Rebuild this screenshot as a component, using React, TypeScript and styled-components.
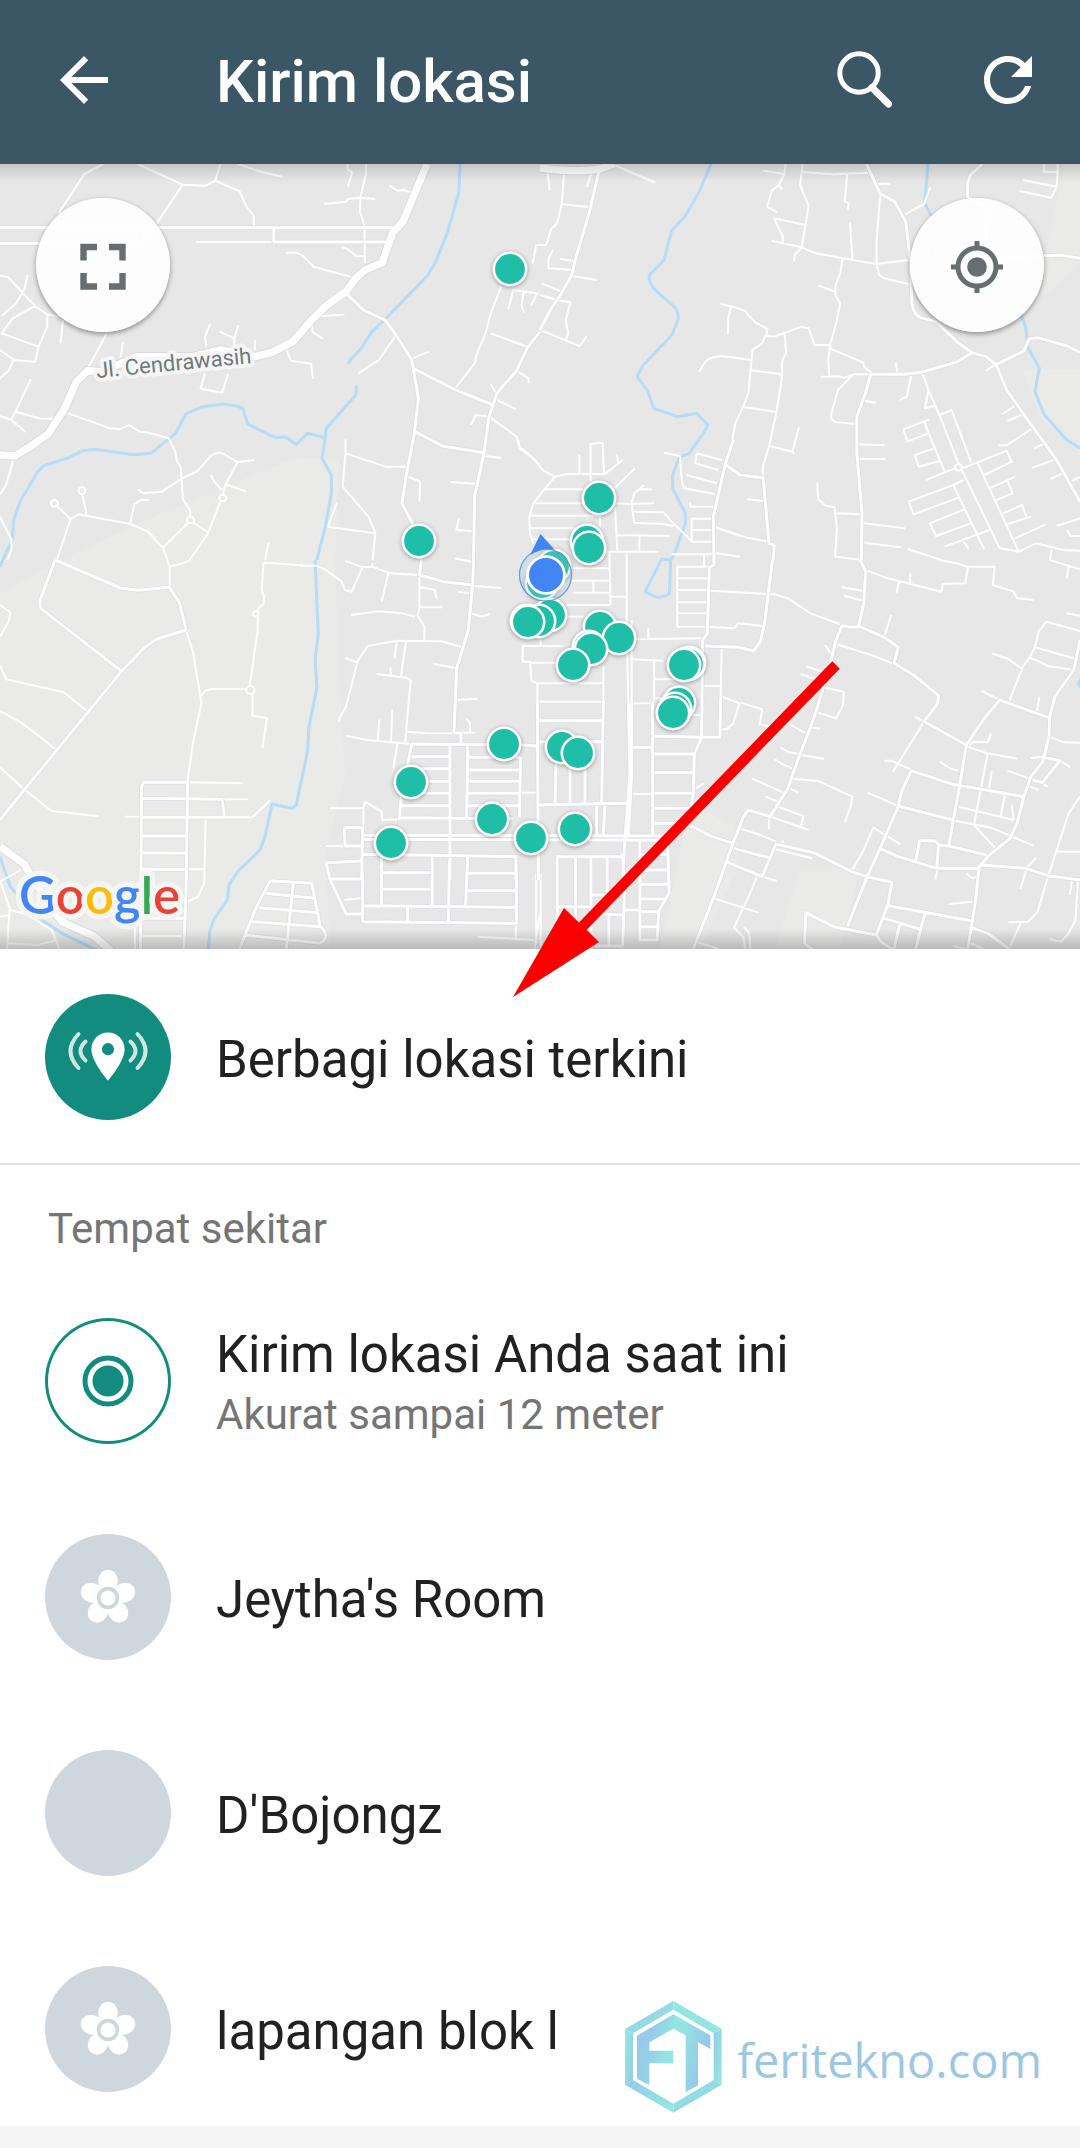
import React from "react";
import styled, { createGlobalStyle } from "styled-components";

const teal = "#128c7e";

const GlobalStyle = createGlobalStyle`
  *, *::before, *::after { box-sizing: border-box; }
  body { margin: 0; background: #ffffff; font-family: Roboto, "Liberation Sans", sans-serif; }
  button { font: inherit; color: inherit; border: 0; padding: 0; background: none; cursor: pointer; }
  svg { display: block; }
`;

const Screen = styled.main`
  position: relative;
  display: flex;
  flex-direction: column;
  height: 100vh;
  overflow: hidden;
  background: #ffffff;
`;

const AppBar = styled.header`
  display: flex;
  flex: none;
  align-items: center;
  height: 164px;
  padding: 0 36px 4px 48px;
  background: #3b5664;
  color: #ffffff;
`;

const Title = styled.h1`
  flex: 1;
  margin: 0 0 0 96px;
  padding-top: 4px;
  font-size: 60px;
  line-height: 72px;
  font-weight: 500;
`;

const Actions = styled.div`
  display: flex;
  gap: 72px;
`;

const IconButton = styled.button`
  display: grid;
  place-items: center;
  width: 72px;
  height: 72px;
`;

const MapPanel = styled.section`
  position: relative;
  flex: none;
  height: 785px;
  background: #e7e7e7;

  &::before, &::after {
    content: "";
    position: absolute;
    left: 0;
    right: 0;
    pointer-events: none;
  }
  &::before {
    top: 0;
    height: 18px;
    background: linear-gradient(rgba(0, 0, 0, 0.14), rgba(0, 0, 0, 0));
  }
  &::after {
    bottom: 0;
    height: 20px;
    background: linear-gradient(rgba(0, 0, 0, 0), rgba(0, 0, 0, 0.2));
  }
`;

const MapCanvas = styled.svg`
  width: 100%;
  height: 100%;
`;

const MapButton = styled.button<{ $side: "left" | "right" }>`
  position: absolute;
  top: 34px;
  ${(p) => p.$side}: 36px;
  z-index: 1;
  display: grid;
  place-items: center;
  width: 134px;
  height: 134px;
  border-radius: 50%;
  background: rgba(255, 255, 255, 0.92);
  box-shadow: 0 2px 5px rgba(0, 0, 0, 0.4);
  color: #666e70;
`;

const Sheet = styled.div`
  flex: 1;
  min-height: 0;
  overflow-y: auto;
  scrollbar-width: none;
`;

const LiveSection = styled.section`
  border-bottom: 2px solid #e0e0e0;
`;

const SectionTitle = styled.h2`
  margin: 0;
  padding: 36px 48px 16px;
  font-size: 42px;
  line-height: 56px;
  font-weight: 400;
  color: #757575;
`;

const PlaceList = styled.ul`
  margin: 0;
  padding: 0;
  list-style: none;
`;

const Row = styled.button<{ $compact?: boolean }>`
  display: flex;
  align-items: center;
  gap: 45px;
  width: 100%;
  padding: 45px 45px ${(p) => (p.$compact ? 43 : 45)}px;
  text-align: left;
`;

const Avatar = styled.span<{ $kind: "live" | "current" | "place" }>`
  display: grid;
  flex: none;
  place-items: center;
  width: 126px;
  height: 126px;
  border-radius: 50%;
  background: ${(p) => (p.$kind === "live" ? teal : p.$kind === "place" ? "#ced7dd" : "#ffffff")};
  box-shadow: ${(p) => (p.$kind === "current" ? `inset 0 0 0 3px ${teal}` : "none")};
`;

const RowText = styled.span`
  display: flex;
  flex-direction: column;
  min-width: 0;
  padding-top: 6px;
`;

const RowTitle = styled.span`
  font-size: 51px;
  line-height: 62px;
  color: #212121;
`;

const RowNote = styled.span`
  font-size: 42px;
  line-height: 58px;
  color: #757575;
`;

const SystemBar = styled.footer`
  flex: none;
  height: 22px;
  background: #f5f5f5;
`;

const Pointer = styled.svg`
  position: absolute;
  top: 660px;
  left: calc(50% - 28px);
  pointer-events: none;
`;

const Watermark = styled.div`
  position: absolute;
  right: 38px;
  bottom: 34px;
  display: flex;
  align-items: center;
  gap: 14px;
  font-family: "Open Sans", "Noto Sans", sans-serif;
  font-size: 47px;
  line-height: 64px;
  color: #9bc7e2;
  pointer-events: none;
`;

const WatermarkName = styled.span`
  padding-top: 6px;
`;

type Tile = {
  at: string;
  major?: string;
  medium: string;
  thin: string;
  water?: string;
  rings?: number[][];
};

const WIDE = "scale(.34439 .33333)";

const tiles: Tile[] = [
  {
    at: `translate(0 -4) ${WIDE}`,
    water:
      "M1336 12L1332 100L1298 220L1265 305L1243 345L1118 478L1080 515L1045 570L1018 598L1012 612M1035 677L1033 705L948 805L935 895L962 945V1000L945 1100L920 1200M940 832L893 820L860 853L830 832H797L720 793L705 745L688 738L648 732L585 741L540 762L510 820L438 880L388 884L275 868L240 872L200 893L127 917L110 935L60 1020L40 1080L35 1140L8 1200",
    major:
      "M1240 12L1170 185L1140 218L1110 308L1060 330L1030 358L1005 395L948 436L905 480L850 545L790 577L740 590L640 570L560 590L400 590L340 615L300 635L255 632L222 665L185 750L140 822L80 865L42 888L0 885",
    medium:
      "M0 203H1145M0 250H420M420 203V250M795 203V246H1120M1005 400L1055 450L1118 480L1150 525L1195 598L1215 715L1203 820L1180 945L1167 1030L1200 1095M1200 625L1320 688L1432 735M1205 815L1285 858L1405 878M1568 515L1530 565L1500 632L1443 700L1420 770L1405 880L1378 1010L1375 1200",
    thin:
      "M570 246H795M300 12L245 42L170 160M400 12L530 74L455 190M530 74L598 77L625 62L640 12M625 62L695 93L715 138L737 168V200M690 12L760 36L820 50M1008 12L1010 28L1023 38L1010 80M1063 12V40L1047 110L1045 155L1058 195L1060 310M940 132L1005 125L1010 117L1045 113L1090 117M1130 77L1155 92L1170 90L1195 98M992 262L1008 266L1035 289H1058M830 278H862L880 288L910 320L1018 350M925 469L1000 464M905 490L908 516L937 536M832 570L845 602L903 611L909 657M1150 525L1100 600L1040 640M1200 594L1245 575M1455 380L1425 460L1410 520L1385 580L1378 610L1322 685M1425 520L1530 560M1490 392L1476 448M1488 390L1560 400L1542 437M1520 396L1514 435L1522 458M1568 255H1557L1547 310M1500 632L1535 655V670M1440 700L1425 673M1443 720L1498 748M1420 770L1382 765L1367 795M1420 770L1500 830L1508 862L1545 890L1568 918M1405 888L1455 893M1308 966L1383 971M1333 1075L1325 1110L1370 1113M1003 838V880L995 980L1070 1070L1090 1118L1082 1200M1003 880L1120 920L1180 920M1180 948L1220 965L1218 1025M978 1028L952 1100L1090 1120M610 492L595 532L600 560M638 515L680 535L692 495M680 535V560M740 540V570M595 640L582 686L645 698L662 642M357 545L350 595M310 520L258 620M0 347L22 350L102 438L137 463L180 470M80 345L72 385L47 430L5 467M102 438L37 475L5 520L112 560M137 463V500L112 560L102 605L40 600L0 570M40 600L25 632L0 655M183 480L176 550M90 657L45 755L118 776H155M45 755L32 780L0 768M32 780L75 816M192 758L320 805L348 808L375 795L405 815L432 818L490 835L508 873L514 905L525 922L531 1018L552 1052V1070M738 900L690 907L655 885Q635 870 612 888L573 933L525 958L470 995L415 1000L402 988M432 1020H410L390 1032L378 1092M38 900L18 975L0 1003M690 907L655 972L648 1003M612 945L622 965L645 990M655 972L715 995M640 1024L605 1118L572 1168L550 1200M545 1090L472 1163L487 1200M562 1088L605 1118M160 1033L205 1077L228 1063L378 1092L430 1115L472 1163M238 1000L252 1065M205 1077L165 1200M0 1070L33 1138V1170L22 1200M780 1147L770 1200",
    rings: [[158, 1030, 10], [238, 992, 10], [647, 1014, 10], [553, 1080, 10]],
  },
  {
    at: `translate(540 -4) ${WIDE}`,
    water:
      "M497 12L460 100L420 170L382 212L360 300L318 345Q310 365 345 400L390 440Q405 460 400 480L383 525L300 615L282 650L312 692L330 745L400 770L455 760L487 795L478 815L432 882L405 890L385 945V985L422 1060V1090L405 1140L382 1200M1127 12L1117 130L1135 165L1160 210L1130 300V430L1150 440L1240 398L1330 405L1390 450L1410 500L1418 565L1450 625L1437 695L1465 765L1530 840L1568 865",
    major: "M0 24Q100 38 170 28L215 12",
    medium:
      "M170 38L145 150L105 290L92 345L62 400L30 450L0 510M948 12L988 102L1030 125L1062 185L1075 300L1080 430Q1085 465 1105 473L1150 485L1210 545L1255 578L1295 590L1325 615L1355 690L1430 800L1500 900L1568 1025M1285 12L1250 45L1241 70V110L1290 140L1297 250M1255 578L1210 606L1110 636L1060 643H960L945 700L920 770V880L935 1060L933 1200M1325 613L1405 573L1420 537L1445 533L1530 558L1568 577M1297 305L1400 290L1510 285L1568 295M540 915L580 945L648 953L665 1150L680 1155L677 1200",
    thin:
      "M70 40L63 132L50 190L32 208L18 255H0M63 132L145 142M22 40L28 90M148 40L137 82M215 15L335 68M38 270L25 295V325L92 330M58 297L97 303M92 348L165 360M5 370L62 395M0 405L50 420L88 427L75 480L82 520L75 540M5 512L115 558L135 530M648 32L710 42L713 12M710 42L693 75L673 92L660 140L690 158M693 75L703 88M763 12L755 75L780 137L760 262M757 35L850 43L955 38M892 43L885 125L897 130L893 150M680 175L770 195M680 175L705 230V250M672 242L760 262L800 280L975 312L1072 300M760 262L740 285L737 305M900 187L907 295M988 102L977 250V312L985 345L1000 355L1070 372M975 72H1015M1060 163L1115 132L1133 82M878 297L872 340L858 375V405L872 430L860 490L842 555M808 376L858 396M525 432L560 440L595 453L625 487L660 507L657 527L680 530L760 500L780 505L797 555H842L845 567L938 607L942 622L963 637M555 440L547 470L545 523M660 515L645 550L617 570L605 700L590 740L567 790L555 860L540 915M710 520L715 577L703 605V650L687 755L665 860L647 920V953M462 635L480 605Q495 590 530 588L612 600M608 630L697 642L703 655M590 741L687 756M667 858L733 875L752 802M733 875L738 882M842 555L837 600L840 650M815 650L865 649L885 653L910 643H960M908 645L865 690L845 765Q843 780 858 787L918 792M940 722L975 728M1033 607L1038 640M1078 645L1065 710L1045 720M1110 638L1128 690L1118 745L1145 738M1128 690L1160 765L1215 910M1160 765L1195 750L1252 907M1055 808L1130 778M1055 808L1067 845L1127 820M1115 785L1175 935M1088 885L1145 865M1088 885L1100 920L1160 903M1120 960L1205 925M1225 925L1270 907L1355 872L1370 905L1290 945M1270 907L1390 1175M1225 930L1335 1165L1390 1175L1440 1150L1520 1170L1568 1172M1070 1025L1200 975L1230 960M1070 1025L1085 1063L1215 1013M1200 975L1290 1168M1132 1090L1232 1048M1132 1090L1150 1128L1250 1090M1175 1160L1305 1110M1230 1145L1245 1168M1305 985L1380 950M1357 962L1372 1000L1325 1020M1345 1060L1400 1035L1412 1070M1350 1095L1425 1070M1380 1135L1468 1093M1500 1098L1568 1075M1343 762L1378 738M1357 783L1397 765M1427 807L1355 856H1333M1435 865L1465 850M1428 924L1492 900M1482 957L1518 940M1545 963L1568 950M920 853L1000 856M928 897H1003M805 967L808 1018L830 1037L855 1042L862 1105L857 1190L935 1200M862 1060L930 1063M940 1090L1060 1105M942 1148L1048 1162M1067 1167L1165 1200M1463 12V36H1503V12M1503 36L1500 80L1485 113L1393 93M1402 60L1500 80M1295 632L1325 612M505 1100L600 1133L665 1145M602 1018L650 1023M1530 1110L1540 1128H1568M1486 1170L1480 1200",
    rings: [[1215, 922, 10]],
  },
  {
    at: `translate(0 396) ${WIDE}`,
    water:
      "M8 0L0 20M915 0L924 220L915 300L920 385L897 500L893 575L860 735L848 745L790 733L768 835L755 870L690 935L665 975L660 1020L620 1080L610 1110L603 1180M0 890L30 980L100 1065L180 1120L290 1175",
    major: "M0 860L70 912L95 955L150 1045L180 1085L275 1130L330 1180",
    medium:
      "M160 0L115 125L118 145L352 333M160 0L350 84L400 91L492 82L522 130L540 210L455 237L420 262L352 335L70 690L0 780M413 667H545M418 667L411 680L408 1180M545 660L540 1000L533 1180M410 715L645 718L652 772M410 772H650M410 828H542M410 878L540 880M410 928H540M410 1075H535M785 962L905 970L930 1100Q962 1130 930 1150L712 1125M785 962L745 1040L690 1180M852 965L830 1180M772 1000L915 1015M752 1043L925 1058M733 1085L930 1100M733 772L785 720M947 908L1050 903M947 908L958 957L1005 1062H1050M958 957H1050M1053 940V1085L1500 1090V940M1053 1037L1500 1042M1183 1040V1088M1305 900L1302 1090M1108 890V1035M1108 938H1250M1108 988H1250M1255 890V1035M1358 890L1352 1035M1355 940H1500M1355 992H1500",
    thin:
      "M485 0L493 20V80M493 20L530 10L555 0M540 210L560 275L585 430L560 550L545 660M0 315L18 358L185 397L258 457M0 453L60 487L120 533L165 572M0 622L70 688L150 753L285 769M583 408L595 393L612 387H715M765 8L760 90L767 110L765 133L750 145L748 215L725 375M733 403V467L775 474L762 565M765 8L880 16M0 135L30 157L25 185L0 230M545 667L705 670M645 718H720M362 770H410M650 772H733M597 775L593 970L575 1010L545 1025M545 928H593M0 960L28 1045L20 1180M28 1050L75 1062L150 1110L178 1180M60 930L0 965M0 1070L25 1065M20 1150L110 1155L165 1140M392 1100V1180M410 1128H533M1000 1020L1050 1015M1498 1090V1140M1387 1130L1550 1140M1568 1060L1550 1180M1557 940V1150",
    rings: [[743, 162, 8], [727, 390, 12]],
  },
  {
    at: `translate(540 396) ${WIDE}`,
    medium:
      "M675 0L652 190L640 245L620 273L578 262L480 258M930 0L946 35L940 130L925 200L905 202L877 197L858 245L845 300L815 410L790 490L752 590L720 685L668 770L605 750L590 770L580 800L560 850L505 1010L440 1180M925 198L1000 232L1040 262L1028 310L1085 345L1157 407L1155 430L1115 485L1238 555L1290 475L1335 420L1475 472M1568 240L1550 330L1495 410L1480 470L1478 530L1460 605L1425 650L1405 710L1385 790L1365 835L1305 885L1275 920L1265 1020L1240 1180M1238 555L1218 680L1200 780L1187 858M1078 632L1195 672L1405 710M1078 632L1050 695L1040 740L990 860L950 950L892 1100M1040 738L1200 780M1187 858L1297 885M1187 858L1160 855L1145 842H1103L1090 905M1157 858L1152 923M988 865L1040 890L1152 925H1280M1280 915L1410 925L1475 947L1568 960M430 793L500 830L560 850M563 865L665 893M540 905L645 950L685 852L800 880L905 935L950 950L1022 967L1010 1035L995 1075L977 1125M1012 1037L1252 1082M1000 1075L1105 1108L1118 1060M1105 1108L1088 1180M1045 1090L1025 1180M977 1125L852 1100L772 1058L768 1150L805 1180M977 1125L990 1145L1040 1180M1252 1103L1300 1120L1380 1180M1457 590L1510 602L1458 668L1430 660M50 890V1180M103 890V1180M148 890V1180M195 890V1005M240 880L245 1000L240 1160M50 890H242M50 1040H150M152 1005H240M180 1062L240 1065M200 1065V1155M160 1158H240M290 840V1140H340L345 1055H290M290 883H370M290 930H370M290 973H375M290 1017H368M290 1100H343M370 840L375 1000L343 1055M245 1050H290",
    thin:
      "M495 92L680 103L720 115L785 160L870 192M480 200L565 205L575 190L648 198M1160 0L1210 10L1240 20H1320L1315 75L1375 95L1385 115L1432 120M950 32L1010 55L1165 95L1170 72L1235 70L1243 20M1043 65L1035 98M1075 40V72M875 82L937 92M883 107L937 122M1020 165L1000 230M860 252L970 288L1030 313M828 255L845 283M775 320L815 333M757 342L805 360M820 382L882 395L880 435L860 475L807 458M787 502L813 507M1535 20L1530 55M1480 0L1568 28M1528 160L1568 167M1568 213L1470 185L1448 215L1437 262L1422 292L1402 320L1363 422M1437 262L1550 295M1422 292L1450 305L1475 318L1550 330M1313 280L1360 297L1402 328M1282 393L1340 422M1450 412L1443 458M1088 470L1115 485L1025 635M1000 602H1020L1075 628M950 697L1040 738M698 562L723 577L755 582M680 597L705 613L732 625M615 655L705 697M755 585L825 596M720 683L750 697M655 710L690 725M735 657L805 662L907 710L903 735L885 787M690 740L765 768L758 797M670 770L780 810M665 770V808M580 805L640 825L685 845M685 868L790 895M705 840V852M505 1015L635 1058M630 950L610 1000L563 1103L590 1130L598 1180M593 1100L607 1120L612 1180M645 950L688 963M450 1145L520 1167M968 803L935 880L905 932M968 803L1047 853M1240 560L1300 580L1387 596M1310 520L1300 547L1260 545L1240 560M1300 580L1260 795L1320 862M1312 633L1302 695L1350 705L1337 770M1370 737L1375 780M1215 740L1375 780M1160 605L1195 627L1215 632M1205 782L1310 803L1433 857M1478 530L1520 547L1568 548M1423 595L1457 590M1357 632L1420 655M1510 602L1540 622M1430 655L1475 680M1422 680L1447 690M1568 710L1535 760L1475 950L1445 1055L1418 1085L1360 1087M1500 875H1568M1440 893L1412 925M1412 930L1395 987M1545 960L1538 1005M1562 962L1555 1080L1535 1120L1512 1145L1480 1138M1187 1032L1255 1025M1238 940L1255 955L1265 950M1155 925L1148 958M1395 1090L1365 1160M583 428L645 448L638 493L670 500M705 480L775 522M445 690L475 670M1200 1158L1235 1167M1245 1148L1290 1167M2 940V1180",
  },
  {
    at: "translate(300 276) scale(.33333)",
    water: "M1112 360L1108 462Q1085 475 1065 470L1035 455L1085 358Z",
    medium:
      "M521 360L518 430L505 570L470 685L462 878L483 880V912M365 355L358 405L430 425L518 435M320 990L335 912L560 914M660 914L710 918M450 915V1320M503 915L500 1135M335 950H450M325 986H450M380 1024H450M305 1060H450M302 1097H450M298 1133L640 1136M305 1050L298 1140M503 952H660M503 990H660M503 1024H660M503 1060H660M503 1097H660M662 950L658 1133M185 1185L1100 1188M185 1198L1100 1201M133 1163H190M133 1163L135 1218H190M188 1160L185 1320M185 1243L650 1250M648 1250V1320M712 780L715 1320M715 842H910M718 905H910M910 780L905 1092M715 1095L978 1090M768 970L765 1092M810 970V1092M855 970V1092M890 1092V1185M915 1092L910 1185M985 785L990 1000L975 1195L968 1320M995 785V1000L985 1190M995 922H1058M1058 785V1190M1060 888L1205 892H1260L1262 770M1205 892L1183 942L1180 1060L1165 1148M1060 942H1183M1060 998H1183M1060 1060H1183M1060 1105H1172M1060 1150H1165M1300 0L1275 75L1240 230L1242 375L1228 382L1222 580L1208 600L1205 892",
    thin:
      "M655 0L660 25L700 55L730 92L765 110L735 145L700 190L688 230L690 280L700 310M765 110L800 102H915L968 60M950 42L955 70M838 42V102M872 125V12L908 8L912 100M735 148H850M705 190H850M688 227H897M690 265H830M695 298H820M945 143L1005 85M948 190L995 192L1062 190M1032 135L1003 160L995 190L1002 248L1090 252L1120 258M1002 215L1090 217L1110 240L1175 303M1055 148H1015M945 200L952 330M950 285L1108 288M1018 288V332M900 335H1075M900 220V260M928 335L932 495M980 335V540L985 785M800 385H928M810 422H928M820 458H930M880 422V455M800 495H930M932 470H980M990 598L1208 595M1045 565V598M1092 38L1140 48L1145 120L1152 145L1245 162M1160 105L1250 130M1170 187L1172 200H1240M1240 236H1175V305H1240M1175 270H1240M1115 343H1240M1212 343V380M1230 380H1132V560H1222M1132 415H1228M1132 450H1226M1132 487H1225M1132 520H1222M1240 260L1320 288M1240 338L1320 350M1190 40L1186 70L1255 90M1190 40L1265 60M790 618H668V665H690L695 722L712 730H910M690 668H770M722 600V615M800 530H850M712 785H910M712 730V785M910 680V780M995 540V785M990 658L1090 662M1062 660V785M1062 718H1160M1062 775H1100M1170 825H1205M995 790H1062M985 1062H1060M660 1058H712M1210 738H1262M1265 625L1262 775M1265 770L1318 790L1300 850L1280 868H1265M0 377H45L70 385L125 425L135 450L155 455L188 382L217 380V370M135 362L188 382M217 380L270 400L358 405M265 400L245 485M358 440L405 450L410 478M358 405V510L352 525L373 560V603M358 502H428M153 525L235 514L305 520L345 530M523 438L603 444M473 455L508 460M515 520L545 530L570 522M203 618L290 602L425 604L488 622M203 618L172 665L165 695L138 800L118 835V845M135 653L172 668M290 602L284 655M318 604L303 708M230 702L320 713L332 722L315 910M272 682V705M400 672L472 685M470 780L532 776M500 835L510 850V878M465 878H525M315 875L390 880H460M138 887L200 900L335 912M238 838L233 900M277 808L273 905M292 912L280 985M90 1105H190L195 1085L245 1115L247 1140L298 1138M190 1100V1160M78 1218H133M463 355L515 365",
  },
];

const markers: [number, number][] = [
  [510, 269], [419, 541], [599, 498], [587, 541], [589, 548], [554, 566], [542, 583],
  [550, 615], [539, 621], [527, 621], [528, 622], [600, 627], [619, 638], [589, 647],
  [591, 649], [573, 665], [689, 663], [688, 664], [684, 665], [679, 703], [675, 709], [673, 713],
  [504, 744], [562, 747], [578, 753], [411, 782], [492, 819], [531, 838], [575, 829],
  [391, 843],
];

const ns = { vectorEffect: "non-scaling-stroke" as const };

function Roads() {
  return (
    <g fill="none" strokeLinejoin="round">
      {tiles.map((t) => (
        <g key={t.at} transform={t.at}>
          {t.water && <path d={t.water} stroke="#b6dcf8" strokeWidth="3" {...ns} />}
          <path d={t.thin} stroke="#fefefe" strokeWidth="2" {...ns} />
        </g>
      ))}
      {tiles.map((t) => (
        <g key={t.at} transform={t.at}>
          <path d={t.medium} stroke="#dcdce3" strokeWidth="4.4" {...ns} />
          {t.major && <path d={t.major} stroke="#d6d6dc" strokeWidth="9" {...ns} />}
        </g>
      ))}
      {tiles.map((t) => (
        <g key={t.at} transform={t.at} stroke="#ffffff">
          <path d={t.medium} strokeWidth="3" {...ns} />
          {t.major && <path d={t.major} strokeWidth="7.5" {...ns} />}
          {t.rings?.map(([x, y, r]) => (
            <circle key={`${x}-${y}`} cx={x} cy={y} r={r} fill="#e9e9e8" strokeWidth="2" {...ns} />
          ))}
        </g>
      ))}
    </g>
  );
}

function NearbyMap() {
  return (
    <MapCanvas viewBox="0 0 1080 785" preserveAspectRatio="xMidYMid slice" role="img" aria-label="Peta tempat sekitar">
      <g fill="#eaeae9">
        <path d="M296 293L340 296L335 396L340 530L345 610L325 690L330 785H0V430L60 396L160 350Z" />
        <path d="M1064 0H1080V100L1035 140ZM1022 205H1080V290L1040 255Z" />
        <path d="M690 640L735 662L740 700L700 785H660Z" />
        <path d="M800 705L860 704L840 785H775Z" />
      </g>
      <path d="M1080 513L1077 520L1080 525Z" fill="#b6dcf8" />
      <Roads />
      <text
        transform="translate(97 214) rotate(-5.5)"
        fontSize="22"
        fill="#70797c"
        stroke="#f5f5f5"
        strokeWidth="8"
        strokeLinejoin="round"
        paintOrder="stroke"
      >
        Jl. Cendrawasih
      </text>
      <g style={{ filter: "drop-shadow(0 1px 2px rgba(0,0,0,.35))" }}>
        {markers.map(([x, y]) => (
          <circle key={`${x}-${y}`} cx={x} cy={y - 164} r="16.2" fill="#1fbea7" stroke="#ffffff" strokeWidth="2.6" />
        ))}
      </g>
      <circle cx="545.5" cy="411" r="26" fill="rgba(150,190,225,.25)" stroke="#6397cf" strokeWidth="1.2" />
      <path d="M540.5 370L530 391Q543 383 555 386Z" fill="#4285f4" />
      <circle cx="546" cy="411" r="18.4" fill="#4285f4" stroke="#ffffff" strokeWidth="2.8" />
      <text
        x="19"
        y="750"
        fontFamily="Lato, sans-serif"
        fontSize="51"
        fontWeight="600"
        stroke="#f5f5f4"
        strokeWidth="11"
        strokeLinejoin="round"
        paintOrder="stroke"
      >
        <tspan fill="#4285f4">G</tspan>
        <tspan fill="#ea4335">o</tspan>
        <tspan fill="#fbbc05">o</tspan>
        <tspan fill="#4285f4">g</tspan>
        <tspan fill="#34a853">l</tspan>
        <tspan fill="#ea4335">e</tspan>
      </text>
    </MapCanvas>
  );
}

function BackIcon() {
  return (
    <svg width="72" height="72" viewBox="0 0 24 24" fill="#ffffff" aria-hidden="true">
      <path d="M20 11H7.83l5.59-5.59L12 4l-8 8 8 8 1.41-1.41L7.83 13H20v-2z" />
    </svg>
  );
}

function SearchIcon() {
  return (
    <svg width="72" height="72" viewBox="0 0 72 72" fill="none" stroke="#ffffff" aria-hidden="true">
      <circle cx="31" cy="29" r="19.2" strokeWidth="5" />
      <path d="M44 43.5L60.5 60" strokeWidth="7" strokeLinecap="round" />
    </svg>
  );
}

function RefreshIcon() {
  return (
    <svg width="72" height="72" viewBox="0 0 24 24" fill="#ffffff" aria-hidden="true">
      <path d="M17.65 6.35C16.2 4.9 14.21 4 12 4c-4.42 0-7.99 3.58-7.99 8s3.57 8 7.99 8c3.73 0 6.84-2.55 7.73-6h-2.08c-.82 2.33-3.04 4-5.65 4-3.31 0-6-2.69-6-6s2.69-6 6-6c1.66 0 3.14.69 4.22 1.78L13 11h7V4l-2.35 2.35z" />
    </svg>
  );
}

function ExpandIcon() {
  return (
    <svg width="78" height="78" viewBox="0 0 78 78" fill="none" stroke="currentColor" strokeWidth="6.4" aria-hidden="true">
      <path d="M19.5 34.5V21H33M45 21H58.5V34.5M58.5 47V60.5H45M33 60.5H19.5V47" />
    </svg>
  );
}

function LocateIcon() {
  return (
    <svg width="78" height="78" viewBox="0 0 78 78" fill="none" stroke="currentColor" strokeWidth="5" aria-hidden="true">
      <circle cx="39" cy="41" r="19" />
      <circle cx="39" cy="41" r="9.8" fill="currentColor" stroke="none" />
      <path d="M39 15V21M39 61V67M13 41H19M59 41H65" />
    </svg>
  );
}

function LiveIcon() {
  return (
    <svg width="126" height="126" viewBox="0 0 126 126" fill="none" aria-hidden="true">
      <path
        d="M63 38.6c-9.2 0-16.6 7.4-16.6 16.6C46.4 67.6 63 86.6 63 86.6s16.6-19 16.6-31.4c0-9.2-7.4-16.6-16.6-16.6zm0 22.7a6.1 6.1 0 1 1 0-12.2 6.1 6.1 0 0 1 0 12.2z"
        fill="#ffffff"
      />
      <path
        d="M40.5 47.5Q30.5 57 40.5 66.5M33.5 40Q17.5 57 33.5 74M85.500 47.5Q95.500 57 85.500 66.500M92.500 40Q108.500 57 92.500 74"
        stroke="#cfe7e4"
        strokeWidth="4"
        strokeLinecap="round"
      />
    </svg>
  );
}

function CurrentIcon() {
  return (
    <svg width="54" height="54" viewBox="0 0 54 54" aria-hidden="true">
      <circle cx="27" cy="27" r="23" fill="none" stroke={teal} strokeWidth="5" />
      <circle cx="27" cy="27" r="15.5" fill={teal} />
    </svg>
  );
}

function FlowerIcon() {
  return (
    <svg width="60" height="60" viewBox="-30 -31 60 60" fill="#ffffff" aria-hidden="true">
      {[0, 72, 144, 216, 288].map((a) => (
        <ellipse key={a} cx="0" cy="-17" rx="9.8" ry="11.2" transform={`rotate(${a})`} />
      ))}
      <circle r="13" />
      <circle r="9.4" fill="none" stroke="#ced7dd" strokeWidth="3.6" />
    </svg>
  );
}

function HexLogo() {
  return (
    <svg width="99" height="114" viewBox="39 32 297 342" aria-hidden="true">
      <defs>
        <linearGradient id="hexLight" x1="0" y1="0" x2="1" y2="1">
          <stop offset="0" stopColor="#96c8ea" />
          <stop offset="1" stopColor="#93ebe0" />
        </linearGradient>
        <linearGradient id="hexDark" x1="0" y1="0" x2="1" y2="1">
          <stop offset="0" stopColor="#93ebe0" />
          <stop offset="1" stopColor="#96c8ea" />
        </linearGradient>
        <linearGradient id="hexLetters" x1="0" y1="0" x2="1" y2="0.3">
          <stop offset="0" stopColor="#96c8ea" />
          <stop offset="0.3" stopColor="#96cfe8" />
          <stop offset="0.55" stopColor="#93e8e0" />
          <stop offset="1" stopColor="#96c8ea" />
        </linearGradient>
      </defs>
      <path d="M42 119L187 35V61L66 132Z" fill="url(#hexLight)" />
      <path d="M187 35L332 119L308 132L187 61Z" fill="#93e6e0" />
      <path d="M332 119V286L308 272V132Z" fill="url(#hexLight)" />
      <path d="M332 286L187 370V343L308 272Z" fill="url(#hexDark)" />
      <path d="M187 370L42 286L66 272L187 343Z" fill="url(#hexLight)" />
      <path d="M42 286V119L66 132V272Z" fill="url(#hexDark)" />
      <path
        d="M78 139L187 75L298 138V179L261 159V288L224 309V138L187 118L115 159V184H187V222H115V288L78 268Z"
        fill="url(#hexLetters)"
      />
    </svg>
  );
}

const places = [
  { name: "Jeytha's Room", icon: true },
  { name: "D'Bojongz", icon: false },
  { name: "lapangan blok l", icon: true },
];

export default function App() {
  return (
    <>
      <GlobalStyle />
      <Screen>
        <AppBar>
          <IconButton aria-label="Kembali"><BackIcon /></IconButton>
          <Title>Kirim lokasi</Title>
          <Actions>
            <IconButton aria-label="Cari"><SearchIcon /></IconButton>
            <IconButton aria-label="Muat ulang"><RefreshIcon /></IconButton>
          </Actions>
        </AppBar>

        <MapPanel>
          <NearbyMap />
          <MapButton $side="left" aria-label="Perbesar peta"><ExpandIcon /></MapButton>
          <MapButton $side="right" aria-label="Lokasi saya"><LocateIcon /></MapButton>
        </MapPanel>

        <Sheet>
          <LiveSection>
            <Row $compact>
              <Avatar $kind="live"><LiveIcon /></Avatar>
              <RowText><RowTitle>Berbagi lokasi terkini</RowTitle></RowText>
            </Row>
          </LiveSection>
          <SectionTitle>Tempat sekitar</SectionTitle>
          <PlaceList>
            <li>
              <Row>
                <Avatar $kind="current"><CurrentIcon /></Avatar>
                <RowText>
                  <RowTitle>Kirim lokasi Anda saat ini</RowTitle>
                  <RowNote>Akurat sampai 12 meter</RowNote>
                </RowText>
              </Row>
            </li>
            {places.map((p) => (
              <li key={p.name}>
                <Row>
                  <Avatar $kind="place">{p.icon && <FlowerIcon />}</Avatar>
                  <RowText><RowTitle>{p.name}</RowTitle></RowText>
                </Row>
              </li>
            ))}
          </PlaceList>
        </Sheet>
        <SystemBar />

        <Pointer width="328" height="340" viewBox="0 0 328 340" aria-hidden="true">
          <path d="M324 5L70 267" stroke="#fa0000" strokeWidth="10.5" />
          <path d="M1 337L52 248L87 282Z" fill="#fa0000" />
        </Pointer>
        <Watermark>
          <HexLogo />
          <WatermarkName>feritekno.com</WatermarkName>
        </Watermark>
      </Screen>
    </>
  );
}
